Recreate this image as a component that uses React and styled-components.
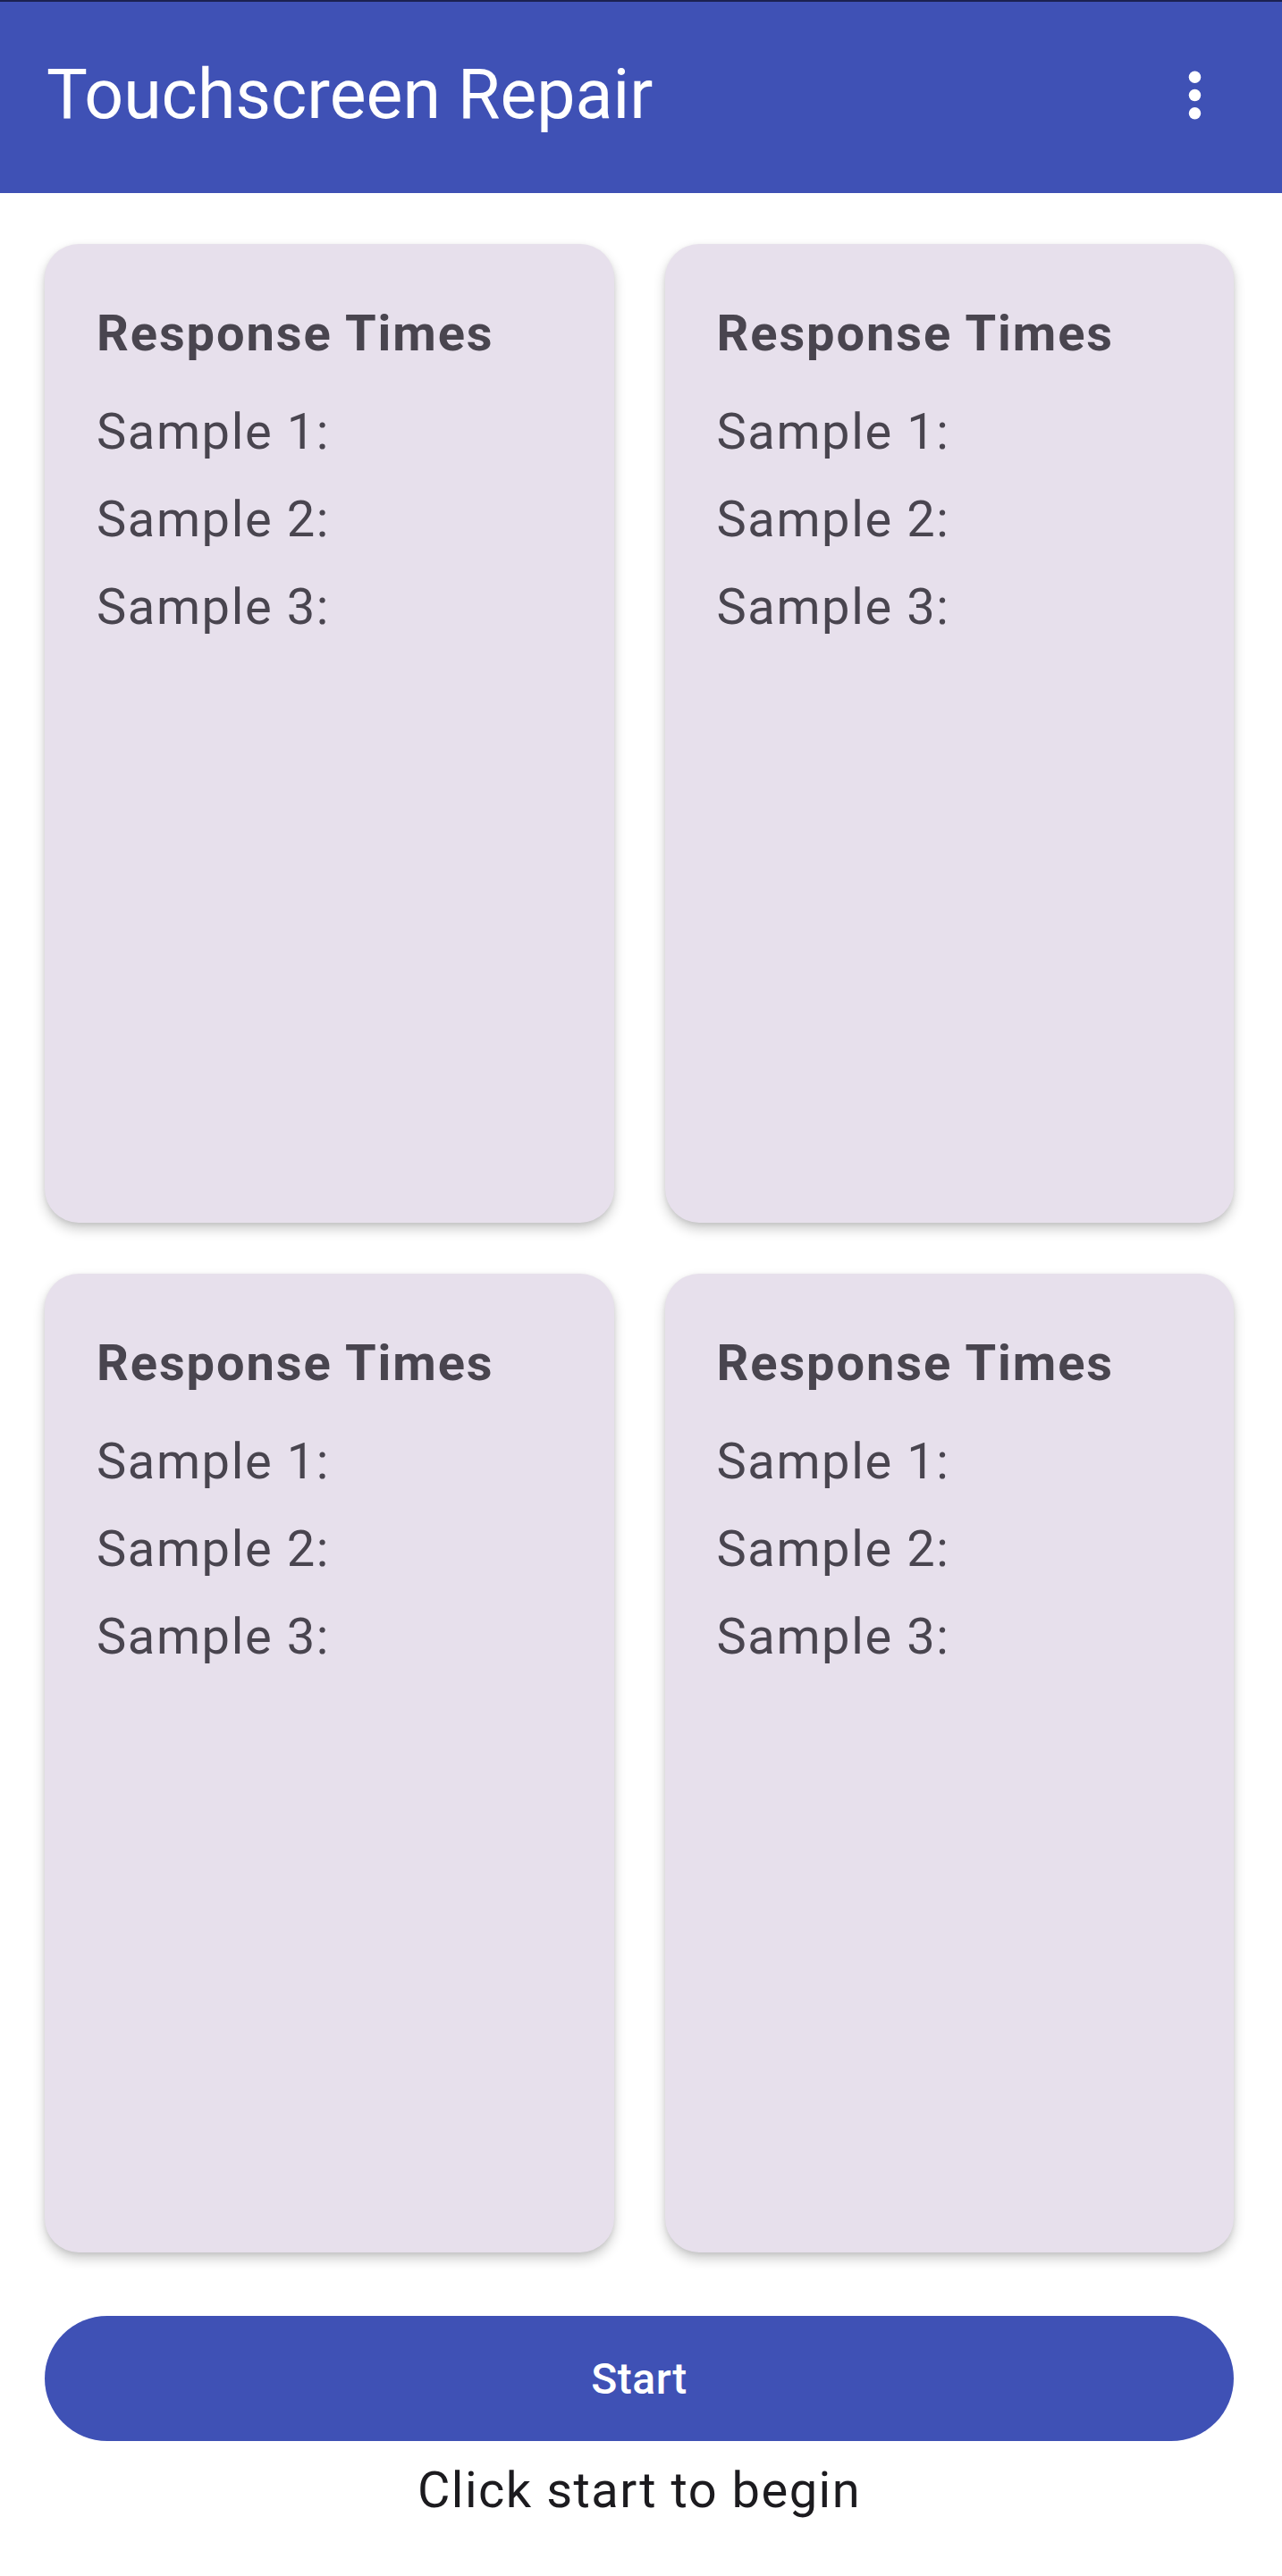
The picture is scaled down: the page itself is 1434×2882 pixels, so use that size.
import React from "react";
import styled, { createGlobalStyle } from "styled-components";

const Global = createGlobalStyle`
  html, body { margin: 0; padding: 0; background: #ffffff; }
  body { font-family: Roboto, "Noto Sans", sans-serif; -webkit-font-smoothing: antialiased; }
  * { box-sizing: border-box; }
`;

const Page = styled.div`
  width: 1434px;
  min-height: 2882px;
  background: #ffffff;
  display: flex;
  flex-direction: column;
`;

const AppBar = styled.header`
  height: 216px;
  background: #3f51b5;
  border-top: 2px solid #1c2150;
  display: flex;
  align-items: center;
  justify-content: space-between;
  padding: 0 57px 6px 52px;
`;

const Title = styled.h1`
  margin: 0;
  font-family: Roboto, sans-serif;
  font-weight: 400;
  font-size: 77px;
  line-height: 77px;
  color: #ffffff;
`;

const MenuButton = styled.button`
  width: 81px;
  height: 81px;
  padding: 0;
  border: none;
  background: transparent;
  display: flex;
  align-items: center;
  justify-content: center;
  svg { display: block; }
`;

const Content = styled.main`
  padding: 57px 54px 0 50px;
  display: flex;
  flex-direction: column;
`;

const Grid = styled.div`
  display: grid;
  grid-template-columns: 1fr 1fr;
  gap: 57px;
`;

const Card = styled.section`
  height: 1095px;
  background: #e7e0ec;
  border-radius: 38px;
  box-shadow: 0 7px 14px rgba(0, 0, 0, 0.2), 0 2px 5px rgba(0, 0, 0, 0.08);
  padding: 67px 40px 0 58px;
  display: flex;
  flex-direction: column;
  color: #49454f;
`;

const CardTitle = styled.h2`
  margin: 0 0 28px;
  font-family: Roboto, sans-serif;
  font-weight: 700;
  font-size: 56px;
  line-height: 66px;
  letter-spacing: 1.9px;
`;

const SampleRow = styled.div`
  font-family: Roboto, sans-serif;
  font-weight: 400;
  font-size: 56px;
  line-height: 98px;
  letter-spacing: 1.6px;
`;

const StartButton = styled.button`
  margin-top: 71px;
  height: 140px;
  width: 100%;
  border: none;
  border-radius: 70px;
  background: #3f51b5;
  color: #ffffff;
  font-family: Roboto, sans-serif;
  font-weight: 500;
  font-size: 48px;
  letter-spacing: 0.5px;
  display: flex;
  align-items: center;
  justify-content: center;
`;

const Hint = styled.p`
  margin: 18px 0 0;
  text-align: center;
  font-family: Roboto, sans-serif;
  font-size: 56px;
  line-height: 74px;
  letter-spacing: 1.5px;
  color: #1c1b1f;
`;

function MoreVert() {
  return (
    <svg width="81" height="81" viewBox="0 0 24 24" aria-hidden="true">
      <circle cx="12" cy="6" r="2" fill="#ffffff" />
      <circle cx="12" cy="12" r="2" fill="#ffffff" />
      <circle cx="12" cy="18" r="2" fill="#ffffff" />
    </svg>
  );
}

function ResponseCard() {
  return (
    <Card>
      <CardTitle>Response Times</CardTitle>
      <SampleRow>Sample 1:</SampleRow>
      <SampleRow>Sample 2:</SampleRow>
      <SampleRow>Sample 3:</SampleRow>
    </Card>
  );
}

export default function App() {
  return (
    <>
      <Global />
      <Page>
        <AppBar>
          <Title>Touchscreen Repair</Title>
          <MenuButton aria-label="More options">
            <MoreVert />
          </MenuButton>
        </AppBar>
        <Content>
          <Grid>
            <ResponseCard />
            <ResponseCard />
            <ResponseCard />
            <ResponseCard />
          </Grid>
          <StartButton>Start</StartButton>
          <Hint>Click start to begin</Hint>
        </Content>
      </Page>
    </>
  );
}
